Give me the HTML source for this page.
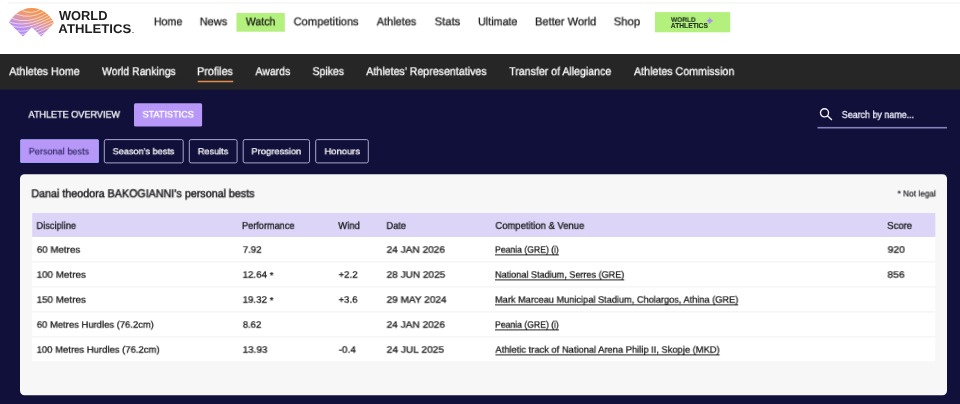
<!DOCTYPE html>
<html>
<head>
<meta charset="utf-8">
<title>Athlete statistics</title>
<style>
*{box-sizing:border-box;margin:0;padding:0}
html,body{width:960px;height:404px;overflow:hidden;background:#11103b;font-family:"Liberation Sans",sans-serif;}
.abs{position:absolute;white-space:nowrap;}
.x{position:absolute;white-space:nowrap;transform-origin:0 0;will-change:transform;text-rendering:geometricPrecision;font-family:"Liberation Sans",sans-serif;}
.u{text-decoration:underline;text-decoration-thickness:0.8px;text-underline-offset:1.5px;}
</style>
</head>
<body>
<svg class="abs" style="left:0;top:0" width="960" height="404" viewBox="0 0 960 404">
 <rect x="0" y="0" width="960" height="54" fill="#fff"/>
 <rect x="8" y="2.2" width="952" height="1.7" fill="#f7f7f7"/>
 <rect x="0" y="54" width="960" height="35.6" fill="#262626"/>
 <rect x="236.5" y="13" width="48.3" height="18.7" fill="#b4f07d"/>
 <rect x="655" y="12.1" width="75.2" height="20.2" fill="#b4f07d"/>
 <rect x="197.7" y="80.75" width="35.5" height="1.5" fill="#e38c52"/>
 <rect x="134" y="103.2" width="68.1" height="23.3" rx="1.5" fill="#b797f7"/>
 <rect x="817.5" y="126.9" width="129.5" height="1.6" fill="#8482b8"/>
 <rect x="20.1" y="139.3" width="78.9" height="23.6" rx="1.5" fill="#7ea6ee"/>
 <rect x="20.6" y="139.5" width="77.7" height="22.9" rx="1" fill="#b797f7"/>
 <g fill="none" stroke="#a9a6ce" stroke-width="1">
  <rect x="104.3" y="139.6" width="78.9" height="23.3" rx="1.8"/>
  <rect x="189.3" y="139.6" width="47.8" height="23.3" rx="1.8"/>
  <rect x="243.2" y="139.6" width="66.3" height="23.3" rx="1.8"/>
  <rect x="315.7" y="139.6" width="52.6" height="23.3" rx="1.8"/>
 </g>
 <rect x="20" y="174.2" width="927" height="221" rx="4.5" fill="#f7f7f8"/>
 <rect x="32.2" y="213" width="903.1" height="24" fill="#dcd5f7"/>
 <rect x="32.2" y="237" width="903.1" height="124.2" fill="#fff"/>
 <g fill="#f1f1f2">
  <rect x="32.2" y="261.4" width="903.1" height="1"/>
  <rect x="32.2" y="286.4" width="903.1" height="1"/>
  <rect x="32.2" y="311.4" width="903.1" height="1"/>
  <rect x="32.2" y="336.4" width="903.1" height="1"/>
 </g>
</svg>
<!-- logo -->
<svg class="abs" style="left:0;top:0" width="64" height="44" viewBox="0 0 64 44">
 <defs>
  <linearGradient id="lg" gradientUnits="userSpaceOnUse" x1="37" y1="9" x2="27" y2="36">
   <stop offset="0" stop-color="#f3934a"/>
   <stop offset="0.3" stop-color="#ee9a72"/>
   <stop offset="0.6" stop-color="#d396c6"/>
   <stop offset="0.82" stop-color="#b88ef3"/>
   <stop offset="1" stop-color="#b08af6"/>
  </linearGradient>
  <clipPath id="cp"><path d="M8.9 22.6 C12.5 16.5 20 8.1 31.5 8.1 C42 8.1 50 14.5 53.9 23 L41.3 36.4 L31.8 27.2 L23 36.4 Z"/></clipPath>
 </defs>
 <path d="M8.9 22.6 C12.5 16.5 20 8.1 31.5 8.1 C42 8.1 50 14.5 53.9 23 L41.3 36.4 L31.8 27.2 L23 36.4 Z" fill="url(#lg)"/>
 <g clip-path="url(#cp)" fill="none" stroke="#fff" stroke-opacity="0.8" stroke-width="0.75">
  <path d="M22.5 10.6 Q31.5 14.6 40.5 9.6"/>
  <path d="M16.2 14.2 Q31 19.5 44 11.5"/>
  <path d="M11.8 18.2 C22 22.5 34 21.5 47.5 13"/>
  <path d="M8.5 21.7 C20 26 33 24.5 50 15"/>
  <path d="M11.5 25.6 C22 29.5 33 26.5 52 17"/>
  <path d="M15.5 30 C22 32.5 28 30.5 33 28.3 L54 19.5"/>
  <path d="M19 33.8 C22 35 25 34 28 32"/>
  <path d="M34.5 30.8 L55 22"/>
  <path d="M36.8 33 L54 25.2"/>
  <path d="M39 35.2 L52 29"/>
 </g>
</svg>
<div class="abs" style="left:132px;top:31.8px;width:1.6px;height:0.7px;background:#999"></div>
<svg class="abs" style="left:705.9px;top:16.8px" width="7.6" height="7.6" viewBox="0 0 7.6 7.6"><path d="M3.8 0 C4.4 2.2 5.4 3.2 7.6 3.8 C5.4 4.4 4.4 5.4 3.8 7.6 C3.2 5.4 2.2 4.4 0 3.8 C2.2 3.2 3.2 2.2 3.8 0 Z" fill="#ac8cef"/></svg>
<svg class="abs" style="left:818px;top:107px" width="16" height="16" viewBox="0 0 16 16"><circle cx="6.5" cy="5.8" r="4.05" fill="none" stroke="#f4f3fb" stroke-width="1.35"/><path d="M9.6 9 L13.5 12.6" stroke="#f4f3fb" stroke-width="1.4" stroke-linecap="round"/></svg>

<div id="txt" style="position:absolute;left:0;top:0;width:960px;height:404px">
<div class="x" id="lw1" style="left:58px;top:6px;font-size:12.5px;line-height:18px;color:#1d1d1d;font-weight:bold;transform:translate(0.96px,0.35px) scale(1.0275,1.0400);">WORLD</div>
<div class="x" id="lw2" style="left:58px;top:20px;font-size:12.5px;line-height:18px;color:#1d1d1d;font-weight:bold;transform:translate(0.36px,0.05px) scale(1.0537,1.0100);">ATHLETICS</div>
<div class="x" id="n1" style="left:153px;top:14px;font-size:11.6px;line-height:16px;color:#1b1b1b;-webkit-text-stroke:0.28px #1b1b1b;transform:translate(0.90px,0.50px) scale(0.9181,0.9800);">Home</div>
<div class="x" id="n2" style="left:199px;top:14px;font-size:11.6px;line-height:16px;color:#1b1b1b;-webkit-text-stroke:0.28px #1b1b1b;transform:translate(0.73px,0.50px) scale(0.9486,0.9800);">News</div>
<div class="x" id="n3" style="left:245px;top:14px;font-size:11.6px;line-height:16px;color:#1b1b1b;-webkit-text-stroke:0.28px #1b1b1b;transform:translate(0.73px,0.50px) scale(0.9154,0.9800);">Watch</div>
<div class="x" id="n4" style="left:293px;top:14px;font-size:11.6px;line-height:16px;color:#1b1b1b;-webkit-text-stroke:0.28px #1b1b1b;transform:translate(0.61px,0.50px) scale(0.9616,0.9800);">Competitions</div>
<div class="x" id="n5" style="left:376px;top:14px;font-size:11.6px;line-height:16px;color:#1b1b1b;-webkit-text-stroke:0.28px #1b1b1b;transform:translate(0.72px,0.50px) scale(0.9446,0.9800);">Athletes</div>
<div class="x" id="n6" style="left:434px;top:14px;font-size:11.6px;line-height:16px;color:#1b1b1b;-webkit-text-stroke:0.28px #1b1b1b;transform:translate(0.59px,0.50px) scale(0.9757,0.9800);">Stats</div>
<div class="x" id="n7" style="left:478px;top:14px;font-size:11.6px;line-height:16px;color:#1b1b1b;-webkit-text-stroke:0.28px #1b1b1b;transform:translate(0.05px,0.50px) scale(0.9257,0.9800);">Ultimate</div>
<div class="x" id="n8" style="left:534px;top:14px;font-size:11.6px;line-height:16px;color:#1b1b1b;-webkit-text-stroke:0.28px #1b1b1b;transform:translate(0.98px,0.50px) scale(0.9541,0.9800);">Better World</div>
<div class="x" id="n9" style="left:613px;top:14px;font-size:11.6px;line-height:16px;color:#1b1b1b;-webkit-text-stroke:0.28px #1b1b1b;transform:translate(0.67px,0.50px) scale(0.9755,0.9800);">Shop</div>
<div class="x" id="wp1" style="left:670px;top:15px;font-size:6.7px;line-height:9px;color:#1c301c;font-weight:bold;-webkit-text-stroke:0.1px #1c301c;transform:translate(0.96px,0.94px) scale(0.9751,0.9800);">WORLD</div>
<div class="x" id="wp2" style="left:670px;top:22px;font-size:6.7px;line-height:9px;color:#1c301c;font-weight:bold;-webkit-text-stroke:0.1px #1c301c;transform:translate(0.83px,0.06px) scale(1.0019,1.0700);">ATHLETICS</div>
<div class="x" id="s1" style="left:9px;top:64px;font-size:11.6px;line-height:16px;color:#fff;-webkit-text-stroke:0.3px #fff;transform:translate(0.22px,0.32px) scale(0.9270,0.9800);">Athletes Home</div>
<div class="x" id="s2" style="left:101px;top:64px;font-size:11.6px;line-height:16px;color:#fff;-webkit-text-stroke:0.3px #fff;transform:translate(0.95px,0.32px) scale(0.9042,0.9800);">World Rankings</div>
<div class="x" id="s3" style="left:197px;top:64px;font-size:11.6px;line-height:16px;color:#fff;-webkit-text-stroke:0.3px #fff;transform:translate(0.12px,0.32px) scale(0.9263,0.9800);">Profiles</div>
<div class="x" id="s4" style="left:255px;top:64px;font-size:11.6px;line-height:16px;color:#fff;-webkit-text-stroke:0.3px #fff;transform:translate(0.46px,0.32px) scale(0.9037,0.9800);">Awards</div>
<div class="x" id="s5" style="left:312px;top:64px;font-size:11.6px;line-height:16px;color:#fff;-webkit-text-stroke:0.3px #fff;transform:translate(0.52px,0.32px) scale(0.9032,0.9800);">Spikes</div>
<div class="x" id="s6" style="left:366px;top:64px;font-size:11.6px;line-height:16px;color:#fff;-webkit-text-stroke:0.3px #fff;transform:translate(0.26px,0.32px) scale(0.9183,0.9800);">Athletes’ Representatives</div>
<div class="x" id="s7" style="left:509px;top:64px;font-size:11.6px;line-height:16px;color:#fff;-webkit-text-stroke:0.3px #fff;transform:translate(0.16px,0.32px) scale(0.9136,0.9800);">Transfer of Allegiance</div>
<div class="x" id="s8" style="left:633px;top:64px;font-size:11.6px;line-height:16px;color:#fff;-webkit-text-stroke:0.3px #fff;transform:translate(0.99px,0.32px) scale(0.9207,0.9800);">Athletes Commission</div>
<div class="x" id="t1" style="left:28px;top:108px;font-size:10px;line-height:14px;color:#fff;-webkit-text-stroke:0.28px #fff;transform:translate(0.49px,0.84px) scale(0.9085,0.9700);">ATHLETE OVERVIEW</div>
<div class="x" id="t2" style="left:142px;top:109px;font-size:10.2px;line-height:14px;color:#fff;-webkit-text-stroke:0.4px #fff;transform:translate(0.55px,0.32px) scale(0.8930,0.9000);">STATISTICS</div>
<div class="x" id="sr" style="left:841px;top:108px;font-size:10px;line-height:14px;color:#f0effa;-webkit-text-stroke:0.3px #f0effa;transform:translate(0.77px,0.98px) scale(0.8915,0.9900);">Search by name...</div>
<div class="x" id="b1" style="left:28px;top:145px;font-size:9.8px;line-height:14px;color:#211c55;-webkit-text-stroke:0.1px #211c55;transform:translate(0.75px,0.79px) scale(0.9304,0.9600);">Personal bests</div>
<div class="x" id="b2" style="left:112px;top:146px;font-size:9.8px;line-height:14px;color:#fff;-webkit-text-stroke:0.28px #fff;transform:translate(0.63px,0.17px) scale(0.9324,0.9000);">Season’s bests</div>
<div class="x" id="b3" style="left:197px;top:146px;font-size:9.8px;line-height:14px;color:#fff;-webkit-text-stroke:0.28px #fff;transform:translate(0.83px,0.17px) scale(0.9324,0.9000);">Results</div>
<div class="x" id="b4" style="left:251px;top:146px;font-size:9.8px;line-height:14px;color:#fff;-webkit-text-stroke:0.28px #fff;transform:translate(0.47px,0.17px) scale(0.9522,0.9000);">Progression</div>
<div class="x" id="b5" style="left:324px;top:146px;font-size:9.8px;line-height:14px;color:#fff;-webkit-text-stroke:0.28px #fff;transform:translate(0.58px,0.17px) scale(0.9557,0.9000);">Honours</div>
<div class="x" id="ttl" style="left:31px;top:186px;font-size:10.8px;line-height:15px;color:#1d1d1f;-webkit-text-stroke:0.45px #1d1d1f;transform:translate(0.42px,0.20px) scale(0.9917,1.0500);">Danai theodora BAKOGIANNI’s personal bests</div>
<div class="x" id="nl" style="left:897px;top:187px;font-size:8.6px;line-height:12px;color:#1d1d1f;-webkit-text-stroke:0.2px #1d1d1f;transform:translate(0.56px,0.48px) scale(0.9638,1.0000);">* Not legal</div>
<div class="x" id="h1" style="left:36px;top:219px;font-size:10px;line-height:14px;color:#111113;-webkit-text-stroke:0.26px #111113;transform:translate(0.48px,0.90px) scale(0.9241,0.9900);">Discipline</div>
<div class="x" id="h2" style="left:242px;top:219px;font-size:10px;line-height:14px;color:#111113;-webkit-text-stroke:0.26px #111113;transform:translate(0.01px,0.90px) scale(0.9161,0.9900);">Performance</div>
<div class="x" id="h3" style="left:338px;top:219px;font-size:10px;line-height:14px;color:#111113;-webkit-text-stroke:0.26px #111113;transform:translate(0.20px,0.90px) scale(0.9480,0.9900);">Wind</div>
<div class="x" id="h4" style="left:386px;top:219px;font-size:10px;line-height:14px;color:#111113;-webkit-text-stroke:0.26px #111113;transform:translate(0.48px,0.90px) scale(0.9253,0.9900);">Date</div>
<div class="x" id="h5" style="left:495px;top:219px;font-size:10px;line-height:14px;color:#111113;-webkit-text-stroke:0.26px #111113;transform:translate(0.41px,0.90px) scale(0.9453,0.9900);">Competition &amp; Venue</div>
<div class="x" id="h6" style="left:887px;top:219px;font-size:10px;line-height:14px;color:#111113;-webkit-text-stroke:0.26px #111113;transform:translate(0.13px,0.90px) scale(0.9576,0.9900);">Score</div>
<div class="x" id="r1a" style="left:36px;top:244px;font-size:10px;line-height:14px;color:#111113;-webkit-text-stroke:0.26px #111113;transform:translate(0.82px,0.43px) scale(0.9742,0.9100);">60 Metres</div>
<div class="x" id="r1b" style="left:242px;top:244px;font-size:10px;line-height:14px;color:#111113;-webkit-text-stroke:0.26px #111113;transform:translate(0.82px,0.43px) scale(0.9592,0.9100);">7.92</div>
<div class="x" id="r1d" style="left:386px;top:244px;font-size:10px;line-height:14px;color:#111113;-webkit-text-stroke:0.26px #111113;transform:translate(0.63px,0.43px) scale(1.0085,0.9100);">24 JAN 2026</div>
<div class="x u" id="r1e" style="left:495px;top:244px;font-size:10px;line-height:14px;color:#111113;-webkit-text-stroke:0.26px #111113;transform:translate(0.02px,0.43px) scale(0.8638,0.9100);">Peania (GRE) (i)</div>
<div class="x" id="r1f" style="left:887px;top:244px;font-size:10px;line-height:14px;color:#111113;-webkit-text-stroke:0.26px #111113;transform:translate(0.63px,0.43px) scale(1.0293,0.9100);">920</div>
<div class="x" id="r2a" style="left:36px;top:269px;font-size:10px;line-height:14px;color:#111113;-webkit-text-stroke:0.26px #111113;transform:translate(0.62px,0.43px) scale(0.9843,0.9100);">100 Metres</div>
<div class="x" id="r2b" style="left:242px;top:269px;font-size:10px;line-height:14px;color:#111113;-webkit-text-stroke:0.26px #111113;transform:translate(0.63px,0.43px) scale(0.9739,0.9100);">12.64</div>
<div class="x" id="r2s" style="left:269px;top:270px;font-size:10px;line-height:14px;color:#111113;-webkit-text-stroke:0.26px #111113;transform:translate(0.70px,0.13px) scale(0.9550,0.9100);">*</div>
<div class="x" id="r2c" style="left:338px;top:269px;font-size:10px;line-height:14px;color:#111113;-webkit-text-stroke:0.26px #111113;transform:translate(0.58px,0.43px) scale(0.9614,0.9100);">+2.2</div>
<div class="x" id="r2d" style="left:386px;top:269px;font-size:10px;line-height:14px;color:#111113;-webkit-text-stroke:0.26px #111113;transform:translate(0.60px,0.43px) scale(1.0036,0.9100);">28 JUN 2025</div>
<div class="x u" id="r2e" style="left:495px;top:269px;font-size:10px;line-height:14px;color:#111113;-webkit-text-stroke:0.26px #111113;transform:translate(0.01px,0.43px) scale(0.9088,0.9100);">National Stadium, Serres (GRE)</div>
<div class="x" id="r2f" style="left:887px;top:269px;font-size:10px;line-height:14px;color:#111113;-webkit-text-stroke:0.26px #111113;transform:translate(0.44px,0.43px) scale(1.0320,0.9100);">856</div>
<div class="x" id="r3a" style="left:36px;top:294px;font-size:10px;line-height:14px;color:#111113;-webkit-text-stroke:0.26px #111113;transform:translate(0.62px,0.43px) scale(0.9843,0.9100);">150 Metres</div>
<div class="x" id="r3b" style="left:242px;top:294px;font-size:10px;line-height:14px;color:#111113;-webkit-text-stroke:0.26px #111113;transform:translate(0.64px,0.43px) scale(0.9695,0.9100);">19.32</div>
<div class="x" id="r3s" style="left:269px;top:295px;font-size:10px;line-height:14px;color:#111113;-webkit-text-stroke:0.26px #111113;transform:translate(0.70px,0.13px) scale(0.9550,0.9100);">*</div>
<div class="x" id="r3c" style="left:338px;top:294px;font-size:10px;line-height:14px;color:#111113;-webkit-text-stroke:0.26px #111113;transform:translate(0.58px,0.43px) scale(0.9545,0.9100);">+3.6</div>
<div class="x" id="r3d" style="left:386px;top:294px;font-size:10px;line-height:14px;color:#111113;-webkit-text-stroke:0.26px #111113;transform:translate(0.59px,0.43px) scale(1.0034,0.9100);">29 MAY 2024</div>
<div class="x u" id="r3e" style="left:495px;top:294px;font-size:10px;line-height:14px;color:#111113;-webkit-text-stroke:0.26px #111113;transform:translate(0.01px,0.43px) scale(0.9214,0.9100);">Mark Marceau Municipal Stadium, Cholargos, Athina (GRE)</div>
<div class="x" id="r4a" style="left:36px;top:319px;font-size:10px;line-height:14px;color:#111113;-webkit-text-stroke:0.26px #111113;transform:translate(0.83px,0.43px) scale(0.9449,0.9100);">60 Metres Hurdles (76.2cm)</div>
<div class="x" id="r4b" style="left:242px;top:319px;font-size:10px;line-height:14px;color:#111113;-webkit-text-stroke:0.26px #111113;transform:translate(0.80px,0.43px) scale(0.9464,0.9100);">8.62</div>
<div class="x" id="r4d" style="left:386px;top:319px;font-size:10px;line-height:14px;color:#111113;-webkit-text-stroke:0.26px #111113;transform:translate(0.63px,0.43px) scale(1.0085,0.9100);">24 JAN 2026</div>
<div class="x u" id="r4e" style="left:495px;top:319px;font-size:10px;line-height:14px;color:#111113;-webkit-text-stroke:0.26px #111113;transform:translate(0.02px,0.43px) scale(0.8638,0.9100);">Peania (GRE) (i)</div>
<div class="x" id="r5a" style="left:36px;top:344px;font-size:10px;line-height:14px;color:#111113;-webkit-text-stroke:0.26px #111113;transform:translate(0.63px,0.43px) scale(0.9497,0.9100);">100 Metres Hurdles (76.2cm)</div>
<div class="x" id="r5b" style="left:242px;top:344px;font-size:10px;line-height:14px;color:#111113;-webkit-text-stroke:0.26px #111113;transform:translate(0.63px,0.43px) scale(0.9884,0.9100);">13.93</div>
<div class="x" id="r5c" style="left:338px;top:344px;font-size:10px;line-height:14px;color:#111113;-webkit-text-stroke:0.26px #111113;transform:translate(0.68px,0.43px) scale(0.9918,0.9100);">-0.4</div>
<div class="x" id="r5d" style="left:386px;top:344px;font-size:10px;line-height:14px;color:#111113;-webkit-text-stroke:0.26px #111113;transform:translate(0.63px,0.43px) scale(1.0178,0.9100);">24 JUL 2025</div>
<div class="x u" id="r5e" style="left:495px;top:344px;font-size:10px;line-height:14px;color:#111113;-webkit-text-stroke:0.26px #111113;transform:translate(0.40px,0.43px) scale(0.9339,0.9100);">Athletic track of National Arena Philip II, Skopje (MKD)</div>
</div>
</body>
</html>
